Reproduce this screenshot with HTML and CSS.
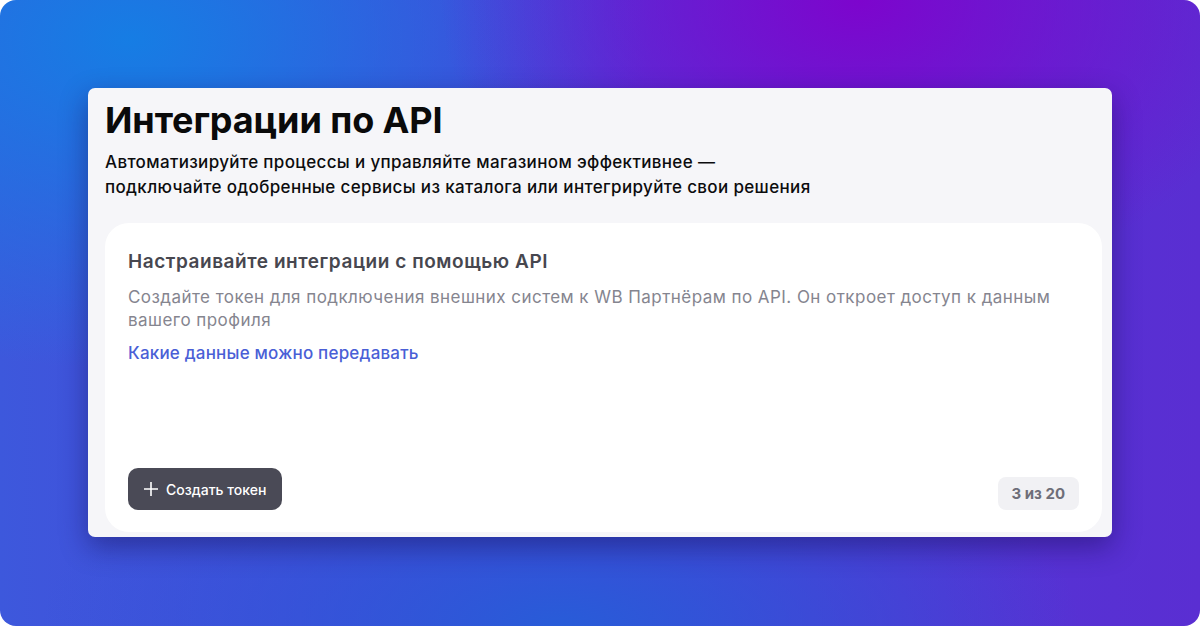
FILE: index.html
```html
<!DOCTYPE html>
<html lang="ru">
<head>
<meta charset="utf-8">
<link rel="stylesheet" href="styles.css">
</head>
<body>
<div class="bg">
  <div class="panel">
    <h1 class="title">Интеграции по API</h1>
    <p class="subtitle">Автоматизируйте процессы и управляйте магазином эффективнее —<br>подключайте одобренные сервисы из каталога или интегрируйте свои решения</p>
    <div class="card">
      <div class="card-top">
        <h2 class="card-title">Настраивайте интеграции с помощью API</h2>
        <p class="card-text">Создайте токен для подключения внешних систем к WB Партнёрам по API. Он откроет доступ к данным вашего профиля</p>
        <a class="card-link" href="#">Какие данные можно передавать</a>
      </div>
      <div class="card-bottom">
        <button class="btn"><svg class="plus" width="16" height="16" viewBox="0 0 16 16"><path d="M8 1v14M1 8h14" stroke="#fff" stroke-width="1.6" fill="none"/></svg><span>Создать токен</span></button>
        <span class="badge">3 из 20</span>
      </div>
    </div>
  </div>
</div>
</body>
</html>
```
FILE: styles.css
```css
html, body {
  margin: 0;
  padding: 0;
  background: #ffffff;
  width: 1200px;
  height: 626px;
  overflow: hidden;
}
.bg {
  box-sizing: border-box;
  width: 1200px;
  height: 626px;
  border-radius: 16px;
  padding: 88px 88px 0 88px;
  font-family: Inter, "Noto Sans", sans-serif;
  background:
    radial-gradient(ellipse 420px 300px at 860px 0px, rgba(125, 5, 205, 1) 0%, rgba(125, 5, 205, 0) 100%),
    radial-gradient(ellipse 520px 330px at 130px 40px, rgba(22, 125, 228, 1) 0%, rgba(22, 125, 228, 0) 100%),
    radial-gradient(ellipse 520px 220px at 560px 626px, rgba(40, 92, 216, 1) 0%, rgba(40, 92, 216, 0) 100%),
    linear-gradient(90deg, #3d58dc 0%, #4c3cd8 50%, #5a2ed2 100%);
}
.panel {
  box-sizing: border-box;
  width: 1024px;
  height: 449px;
  background: #f6f6f9;
  border-radius: 7px;
  padding: 10px 10px 5px 17px;
  display: flex;
  flex-direction: column;
  box-shadow: 0 10px 28px rgba(20, 10, 80, 0.45);
}
.title {
  margin: 0;
  font-size: 36px;
  font-weight: 700;
  line-height: 44px;
  color: #0a0a0a;
  letter-spacing: -0.1px;
}
.subtitle {
  margin: 8px 0 0 0;
  font-size: 17px;
  line-height: 25px;
  color: #0c0c0e;
  font-weight: 500;
  letter-spacing: 0.35px;
}
.card {
  margin-top: 23px;
  flex: 1;
  background: #ffffff;
  border-radius: 24px;
  padding: 26px 23px 22px 23px;
  display: flex;
  flex-direction: column;
  justify-content: space-between;
}
.card-title {
  margin: 0;
  font-size: 19px;
  line-height: 26px;
  font-weight: 600;
  color: #47474f;
  letter-spacing: 0.55px;
}
.card-text {
  margin: 11px 0 0 0;
  font-size: 17px;
  line-height: 23px;
  color: #85858f;
  max-width: 960px;
  letter-spacing: 0.45px;
}
.card-link {
  display: inline-block;
  margin-top: 10px;
  font-size: 17px;
  line-height: 22px;
  font-weight: 500;
  color: #4a5fd6;
  text-decoration: none;
  letter-spacing: 0.2px;
}
.card-bottom {
  display: flex;
  justify-content: space-between;
  align-items: flex-end;
}
.btn {
  display: flex;
  align-items: center;
  gap: 7px;
  height: 42px;
  padding: 0 16px 0 15px;
  border: none;
  border-radius: 10px;
  background: #4a4a56;
  color: #ffffff;
  font-family: Inter, "Noto Sans", sans-serif;
  font-size: 14px;
  font-weight: 500;
}
.plus {
  display: block;
}
.badge {
  display: inline-flex;
  align-items: center;
  height: 33px;
  padding: 0 14px;
  border-radius: 8px;
  background: #f1f1f4;
  color: #6e6e78;
  font-size: 15px;
  font-weight: 700;
}
```
